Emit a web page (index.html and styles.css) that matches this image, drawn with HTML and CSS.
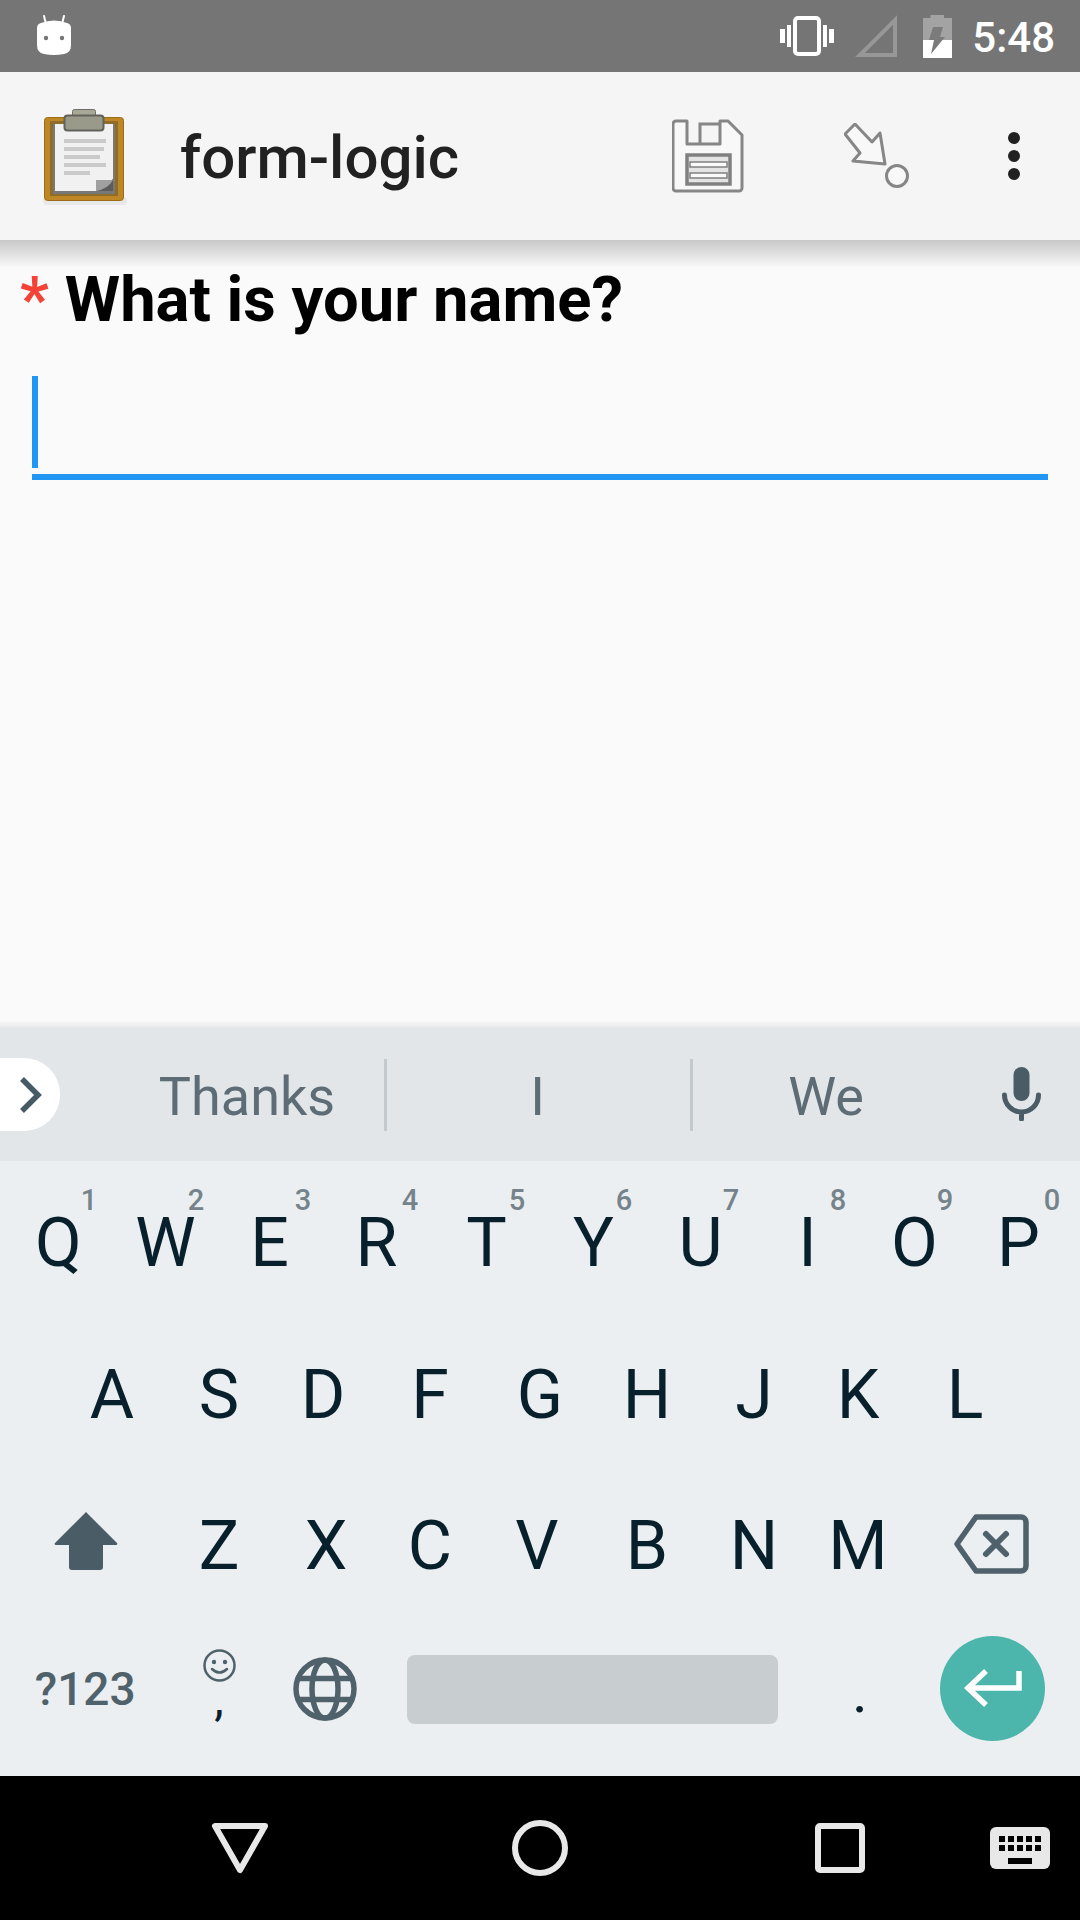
FILE: index.html
```html
<!DOCTYPE html>
<html lang="en">
<head>
    <meta charset="UTF-8">
    <meta name="viewport" content="width=device-width, initial-scale=1.0">
    <title>form-logic</title>
    <link rel="stylesheet" href="styles.css">
</head>
<body>
    <div class="screen">
        <div class="status-bar">
            <svg class="status-android" width="34" height="40" viewBox="0 0 34 40">
                <path d="M7 1 L9 9 M27 1 L25 9" stroke="#fff" stroke-width="2" stroke-linecap="round"/>
                <path d="M4 8 Q17 3 30 8 Q34 9 34 13 V30 Q34 38 27 39 Q17 41 7 39 Q0 38 0 30 V13 Q0 9 4 8Z" fill="#fff"/>
                <circle cx="9" cy="23" r="2.2" fill="#757575"/>
                <circle cx="25" cy="23" r="2.2" fill="#757575"/>
            </svg>
            <svg class="status-vibrate" width="54" height="40" viewBox="0 0 54 40">
                <rect x="15" y="2" width="24" height="36" rx="3" fill="none" stroke="#fff" stroke-width="4"/>
                <path d="M0 13h5v14H0zM7 9h4v22H7zM43 9h4v22h-4zM49 13h5v14h-5z" fill="#fff"/>
            </svg>
            <svg class="status-signal" width="42" height="42" viewBox="0 0 42 42">
                <path d="M5 40 L40 5 V40Z" fill="none" stroke="#979797" stroke-width="4"/>
            </svg>
            <svg class="status-battery" width="29" height="43" viewBox="0 0 29 43">
                <path d="M7.500 0h13.500v3h8v40H0V3h7.500z" fill="#a3a3a3"/>
                <path d="M0 25h29v18H0z" fill="#fff"/>
                <path d="M10 12h10l-3 10h5L8 39l3-14H6z" fill="#7b7b7b"/>
            </svg>
            <span class="status-time">5:48</span>
        </div>

        <div class="app-bar">
            <svg class="app-logo" width="90" height="102" viewBox="0 0 90 102">
                <rect x="3" y="92" width="84" height="8" rx="4" fill="#e8e8e8"/>
                <rect x="4.500" y="12.500" width="79" height="83" rx="3" fill="#bc8724" stroke="#9c6c18"/>
                <rect x="10" y="16" width="68" height="75" fill="#8f6c2a"/>
                <rect x="13" y="19" width="62" height="70" fill="#787878"/>
                <rect x="15" y="19" width="58" height="67" fill="#f1f1f1"/>
                <path d="M24 34h42v4H24zM24 42h40v4H24zM24 50h36v4H24zM24 58h42v4H24zM24 66h26v4H24z" fill="#cacaca"/>
                <path d="M56 86 L73 86 V74Z" fill="#5c5c5c"/>
                <path d="M56 86 V75 H73 Q68 84 56 86Z" fill="#a0a0a0"/>
                <rect x="32.500" y="4.500" width="23" height="10" rx="2" fill="#a8a896" stroke="#6e6e66"/>
                <rect x="24.500" y="10.500" width="39" height="15" rx="3" fill="#9a9a8b" stroke="#62625c" stroke-width="2"/>
            </svg>
            <span class="app-title">form-logic</span>
            <svg class="icon-save" width="72" height="74" viewBox="0 0 72 74">
                <path d="M4 2 H15 V25 H48 V2 H56 L70 16 V69 a3 3 0 0 1 -3 3 H4 a3 3 0 0 1 -3 -3 V5 a3 3 0 0 1 3 -3Z" fill="#f8f8f8" stroke="#868686" stroke-width="3" stroke-linejoin="round"/>
                <path d="M28 25 V5 H48" fill="none" stroke="#868686" stroke-width="3"/>
                <rect x="15" y="36" width="43" height="29" fill="#e4e4e4" stroke="#808080" stroke-width="3.500"/>
                <path d="M18 43h37v5H18zM18 54h37v5H18z" fill="#fafafa" stroke="#808080" stroke-width="1.500"/>
            </svg>
            <svg class="icon-goto" width="66" height="66" viewBox="0 0 66 66">
                <path d="M11 1 L1 11 L16 30 L9 38 L41 41 L36 10 L28 19Z" fill="#f8f8f8" stroke="#868686" stroke-width="3" stroke-linejoin="round"/>
                <circle cx="53" cy="53" r="10.500" fill="#f8f8f8" stroke="#868686" stroke-width="3"/>
            </svg>
            <div class="overflow-menu">
                <span class="dot"></span>
                <span class="dot"></span>
                <span class="dot"></span>
            </div>
        </div>

        <div class="content">
            <div class="question">
                <span class="required">*</span>
                <span class="question-text">What is your name?</span>
            </div>
            <div class="answer-field">
                <div class="caret"></div>
            </div>
        </div>

        <div class="suggestions">
            <div class="expand-tab">
                <svg width="22" height="36" viewBox="0 0 22 36">
                    <path d="M2 2 L18 18 L2 34" fill="none" stroke="#455a64" stroke-width="5.500"/>
                </svg>
            </div>
            <span class="suggestion suggestion-first">Thanks</span>
            <span class="suggestion-sep"></span>
            <span class="suggestion suggestion-mid">I</span>
            <span class="suggestion-sep"></span>
            <span class="suggestion suggestion-last">We</span>
            <svg class="mic" width="39" height="54" viewBox="0 0 39 54">
                <rect x="11.500" y="0" width="16" height="34" rx="8" fill="#4a5c66"/>
                <path d="M2.500 28 a17 17 0 0 0 34 0 M19.500 45 V52" fill="none" stroke="#4a5c66" stroke-width="5" stroke-linecap="round"/>
            </svg>
        </div>

        <div class="keyboard">
            <div class="key-row">
                <div class="key">Q<span class="hint">1</span></div>
                <div class="key">W<span class="hint">2</span></div>
                <div class="key key-left">E<span class="hint">3</span></div>
                <div class="key key-left">R<span class="hint">4</span></div>
                <div class="key">T<span class="hint">5</span></div>
                <div class="key">Y<span class="hint">6</span></div>
                <div class="key">U<span class="hint">7</span></div>
                <div class="key">I<span class="hint">8</span></div>
                <div class="key">O<span class="hint">9</span></div>
                <div class="key key-left">P<span class="hint">0</span></div>
            </div>
            <div class="key-row">
                <div class="key">A</div>
                <div class="key">S</div>
                <div class="key key-left">D</div>
                <div class="key key-left">F</div>
                <div class="key">G</div>
                <div class="key">H</div>
                <div class="key">J</div>
                <div class="key key-left">K</div>
                <div class="key key-left">L</div>
            </div>
            <div class="key-row">
                <div class="key key-wide key-shift">
                    <svg width="64" height="60" viewBox="0 0 64 60">
                        <path d="M32 1 L63 32 Q64 34 62 34 H49 V56 Q49 59 46 59 H18 Q15 59 15 56 V34 H2 Q0 34 1 32Z" fill="#4a5c66"/>
                    </svg>
                </div>
                <div class="key">Z</div>
                <div class="key">X</div>
                <div class="key key-left">C</div>
                <div class="key key-left">V</div>
                <div class="key">B</div>
                <div class="key">N</div>
                <div class="key key-left">M</div>
                <div class="key key-wide key-delete">
                    <svg width="75" height="60" viewBox="0 0 75 60">
                        <path d="M22 3 H67 a5 5 0 0 1 5 5 V52 a5 5 0 0 1 -5 5 H22 L3 30Z" fill="none" stroke="#4f626b" stroke-width="5.500" stroke-linejoin="round"/>
                        <path d="M32 20 L52 40 M52 20 L32 40" stroke="#4f626b" stroke-width="6" stroke-linecap="round"/>
                    </svg>
                </div>
            </div>
            <div class="key-row key-row-bottom">
                <div class="key key-wide key-symbols">?123</div>
                <div class="key key-comma">
                    <svg width="33" height="33" viewBox="0 0 33 33">
                        <circle cx="16.500" cy="16.500" r="15" fill="none" stroke="#4f626b" stroke-width="2.500"/>
                        <circle cx="11" cy="13" r="2.200" fill="#4f626b"/>
                        <circle cx="22" cy="13" r="2.200" fill="#4f626b"/>
                        <path d="M9 20 Q16.500 27 24 20" fill="none" stroke="#4f626b" stroke-width="2.500" stroke-linecap="round"/>
                    </svg>
                    <span class="comma">,</span>
                </div>
                <div class="key key-globe">
                    <svg width="64" height="64" viewBox="0 0 64 64">
                        <g fill="none" stroke="#4f626b" stroke-width="5.500">
                            <circle cx="32" cy="32" r="29"/>
                            <ellipse cx="32" cy="32" rx="13" ry="29"/>
                            <path d="M5 21.500 H59 M5 42.500 H59"/>
                        </g>
                    </svg>
                </div>
                <div class="key key-space"><div class="space-bar"></div></div>
                <div class="key key-period">.</div>
                <div class="key key-wide key-enter">
                    <div class="enter-button">
                        <svg width="60" height="40" viewBox="0 0 60 40">
                            <path d="M56 3 V20 H5 M23 3 L5 20 L23 37" fill="none" stroke="#fff" stroke-width="5.500"/>
                        </svg>
                    </div>
                </div>
            </div>
        </div>

        <div class="nav-bar">
            <svg class="nav-back" width="62" height="56" viewBox="0 0 62 56">
                <path d="M6 6 H56 L31 50Z" fill="none" stroke="#e8e8e8" stroke-width="6" stroke-linejoin="round"/>
            </svg>
            <svg class="nav-home" width="60" height="60" viewBox="0 0 60 60">
                <circle cx="30" cy="30" r="25" fill="none" stroke="#e8e8e8" stroke-width="6"/>
            </svg>
            <svg class="nav-recents" width="56" height="56" viewBox="0 0 56 56">
                <rect x="6" y="6" width="44" height="44" rx="2" fill="none" stroke="#e8e8e8" stroke-width="6"/>
            </svg>
            <svg class="nav-keyboard" width="60" height="42" viewBox="0 0 60 42">
                <rect width="60" height="42" rx="6" fill="#e8e8e8"/>
                <path d="M9 9h6v6H9zM18 9h6v6h-6zM27 9h6v6h-6zM36 9h6v6h-6zM45 9h6v6h-6zM9 18h6v6H9zM18 18h6v6h-6zM27 18h6v6h-6zM36 18h6v6h-6zM45 18h6v6h-6zM18 31h24v6H18z" fill="#000"/>
            </svg>
        </div>
    </div>
</body>
</html>
```
FILE: styles.css
```css
body { margin: 0; font-family: Roboto, "Noto Sans", sans-serif; background: #fafafa; }
svg { display: block; flex: none; }
.screen { width: 1080px; height: 1920px; display: flex; flex-direction: column; overflow: hidden; }

.status-bar { height: 72px; flex: none; display: flex; align-items: center; background: #757575; padding: 0 25px 0 37px; box-sizing: border-box; }
.status-android { margin-top: -2px; margin-right: auto; }
.status-vibrate { margin-right: 21px; }
.status-signal { margin-right: 26px; }
.status-battery { margin-right: 20px; }
.status-time { font-size: 42px; font-weight: 500; color: #fff; line-height: 72px; padding-top: 4px; }

.app-bar { height: 168px; flex: none; display: flex; align-items: center; background: #f5f5f5; padding: 0 60px 0 40px; box-sizing: border-box; position: relative; }
.app-bar::after { content: ""; position: absolute; left: 0; right: 0; top: 100%; height: 28px; background: linear-gradient(#c8c8c8, #fafafa); }
.app-logo { margin-right: 50px; }
.app-title { flex: 1; font-size: 60px; font-weight: 500; color: #212121; padding-top: 3px; }
.icon-save { margin-right: 100px; }
.icon-goto { margin-right: 98px; }
.overflow-menu { display: flex; flex-direction: column; gap: 6px; }
.dot { width: 12px; height: 12px; border-radius: 50%; background: #212121; }

.content { flex: 1; background: #fafafa; padding-top: 24px; }
.question { display: flex; font-size: 63.300px; font-weight: 700; line-height: 71px; color: #000; padding-left: 20px; }
.required { color: #f44336; margin-right: 16px; }
.answer-field { margin: 41px 32px 0; height: 98px; border-bottom: 6px solid #2196f3; }
.caret { width: 6px; height: 92px; background: #2196f3; }

.suggestions { height: 133px; flex: none; display: flex; align-items: center; background: #e2e6e9; position: relative; }
.suggestions::before { content: ""; position: absolute; left: 0; right: 0; bottom: 100%; height: 8px; background: linear-gradient(#fafafa, #e8e8e8); }
.expand-tab { width: 60px; height: 73px; display: flex; align-items: center; justify-content: flex-end; padding-right: 18px; box-sizing: border-box; background: #fff; border-radius: 0 36px 36px 0; }
.suggestion { font-size: 54px; color: #5d6c75; text-align: center; padding-top: 4px; box-sizing: border-box; }
.suggestion-first { width: 324px; padding-left: 50px; }
.suggestion-mid { width: 303px; padding-right: 2px; }
.suggestion-last { width: 266px; }
.suggestion-sep { width: 3px; height: 72px; background: #c2cacd; }
.mic { margin-left: auto; margin-right: 39px; margin-top: -1px; }

.keyboard { height: 615px; flex: none; background: #eceff1; }
.key-row { height: 151.500px; display: flex; justify-content: center; }
.key { width: 107px; flex: none; position: relative; box-sizing: border-box; padding-top: 42px; font-size: 68px; line-height: 80px; color: #07202c; text-align: center; }
.key-left { padding-right: 6px; }
.hint { position: absolute; top: 25px; right: 12px; width: 22px; font-size: 29px; line-height: 29px; font-weight: 500; color: #75838b; }
.key-wide { width: 160.500px; }
.key-shift, .key-delete { display: flex; justify-content: center; padding-top: 47px; }
.key-shift { padding-left: 2px; }
.key-delete { padding-right: 6px; padding-top: 50px; }

.key-row-bottom { height: 160.500px; align-items: center; padding-bottom: 14px; box-sizing: border-box; }
.key-row-bottom .key { padding-top: 0; display: flex; flex-direction: column; align-items: center; justify-content: center; }
.key-symbols { font-size: 46px; font-weight: 500; color: #4f626b; }
.key-comma { height: 80px; }
.key-row-bottom .key-comma { justify-content: flex-start; padding-top: 0; }
.comma { font-size: 48px; line-height: 30px; margin-top: 2px; }
.key-row-bottom .key-globe { padding-right: 2px; }
.key-space { width: 428px; }
.space-bar { width: 371px; height: 69px; border-radius: 8px; background: #c8cdd0; margin: 2px 3px 0 0; }
.key-row-bottom .key-period { font-size: 60px; padding-top: 6px; padding-right: 2px; }
.key-enter { height: 105px; }
.enter-button { width: 105px; height: 105px; border-radius: 50%; background: #4db6ac; display: flex; align-items: center; justify-content: center; margin-right: 4px; padding-bottom: 2px; box-sizing: border-box; }

.nav-bar { height: 144px; flex: none; display: flex; align-items: center; background: #000; padding-left: 209px; box-sizing: border-box; }
.nav-home { margin-left: 239px; }
.nav-recents { margin-left: 242px; }
.nav-keyboard { margin-left: 122px; }
```
